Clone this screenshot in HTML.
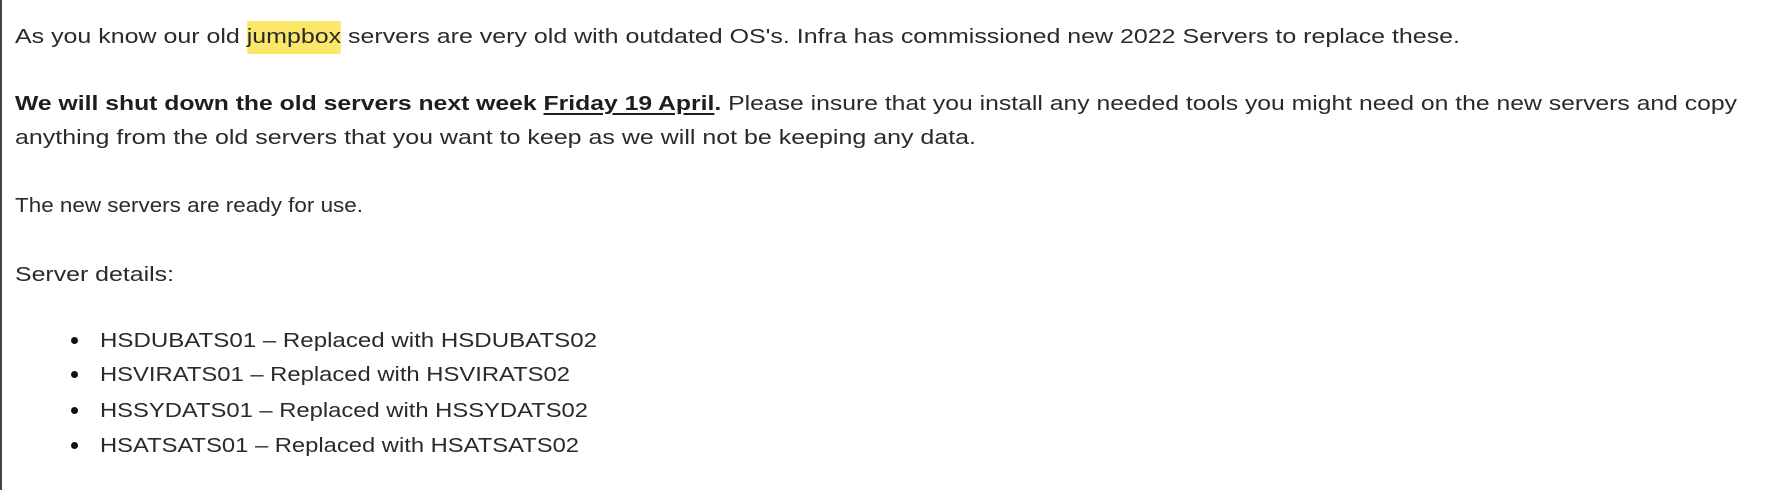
<!DOCTYPE html>
<html><head><meta charset="utf-8"><style>
html,body{margin:0;padding:0;background:#fff;width:1790px;height:490px;overflow:hidden;position:relative}
body{border-left:2px solid #444;box-sizing:border-box;font-family:"Liberation Sans",Arial,sans-serif;font-size:20px;color:#2a2a2a}
.l{position:absolute;white-space:nowrap;line-height:24px;transform-origin:0 50%}
.hl{background:#fbe86a;padding:5px 0 6px}
b{font-weight:bold;color:#1e1e1e}
u{text-decoration-thickness:1.5px;text-underline-offset:3px}
.dot{position:absolute;width:7px;height:7px;border-radius:50%;background:#111}
</style></head><body>
<div class="l" data-x="15" data-r="1460" style="top:25px">As you know our old <span class="hl">jumpbox</span> servers are very old with outdated OS's. Infra has commissioned new 2022 Servers to replace these.</div>
<div class="l" data-x="15" data-r="1737" style="top:92px"><b>We will shut down the old servers next week <u>Friday 19 April</u>.</b> Please insure that you install any needed tools you might need on the new servers and copy</div>
<div class="l" data-x="15" data-r="976" style="top:126px">anything from the old servers that you want to keep as we will not be keeping any data.</div>
<div class="l" data-x="15" data-r="363" style="top:194px">The new servers are ready for use.</div>
<div class="l" data-x="15" data-r="174" style="top:263px">Server details:</div>
<div class="dot" style="left:69px;top:337px"></div>
<div class="dot" style="left:69px;top:371px"></div>
<div class="dot" style="left:69px;top:407px"></div>
<div class="dot" style="left:69px;top:442px"></div>
<div class="l" data-x="100" data-r="597" style="top:329px">HSDUBATS01 – Replaced with HSDUBATS02</div>
<div class="l" data-x="100" data-r="570" style="top:363px">HSVIRATS01 – Replaced with HSVIRATS02</div>
<div class="l" data-x="100" data-r="588" style="top:399px">HSSYDATS01 – Replaced with HSSYDATS02</div>
<div class="l" data-x="100" data-r="579" style="top:434px">HSATSATS01 – Replaced with HSATSATS02</div>
<script>
document.querySelectorAll('.l').forEach(function(e){
 var x=+e.dataset.x, r=+e.dataset.r;
 e.style.left=(x-2)+'px';
 var w=e.getBoundingClientRect().width;
 e.style.transform='scaleX('+((r-x)/w)+')';
});
</script>
</body></html>
